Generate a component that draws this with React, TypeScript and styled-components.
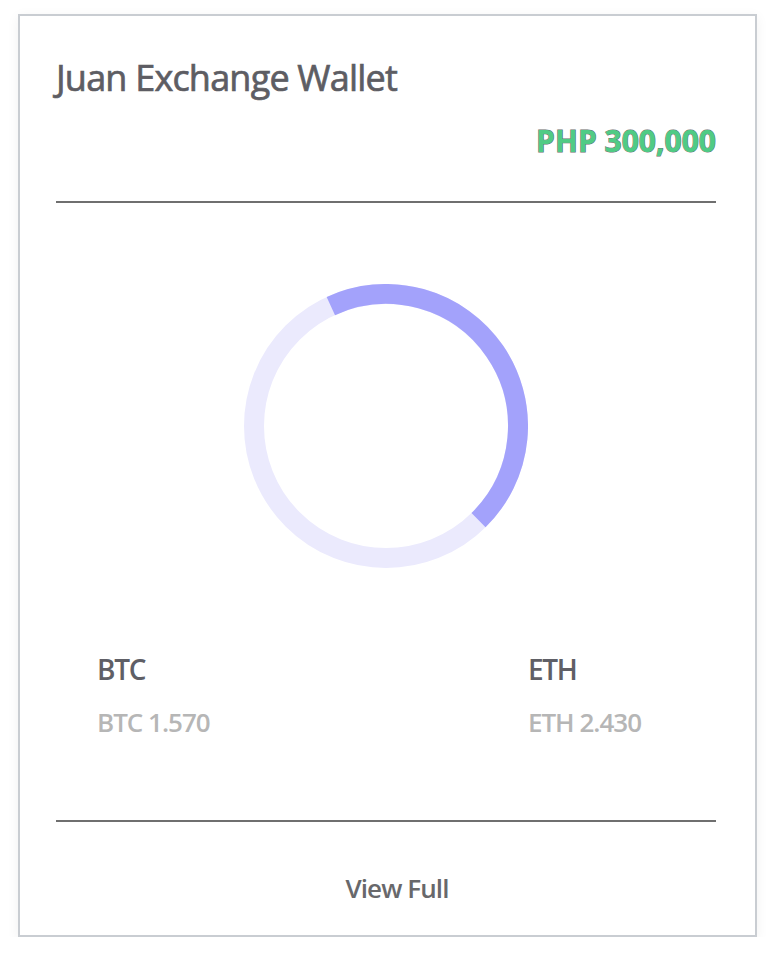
import React from 'react';
import styled, { createGlobalStyle } from 'styled-components';

const GlobalStyle = createGlobalStyle`
  html, body {
    margin: 0;
    padding: 0;
    background: #ffffff;
  }
  body {
    font-family: 'Open Sans', 'Noto Sans', sans-serif;
  }
`;

const Card = styled.div`
  box-sizing: border-box;
  width: 739px;
  margin: 14px 0 0 18px;
  border: 2px solid #c9cdd2;
  background: #fff;
  box-shadow: 0 3px 12px rgba(0, 0, 0, 0.06);
  padding: 44px 39px 34px 36px;
  display: flex;
  flex-direction: column;
`;

const Title = styled.h1`
  margin: 0;
  font-size: 36px;
  line-height: 1;
  font-weight: 400;
  color: #5d5d63;
  -webkit-text-stroke: 0.7px #5d5d63;
  letter-spacing: -0.8px;
`;

const Total = styled.div`
  margin-top: 30px;
  align-self: flex-end;
  font-size: 30px;
  line-height: 1;
  font-weight: 700;
  color: #4fcb85;
  -webkit-text-stroke: 1px #6d6d6d;
  paint-order: stroke fill;
`;

const Divider = styled.hr<{ $gap: number }>`
  margin: ${(p) => p.$gap}px 0 0;
  border: none;
  height: 2px;
  background: #6f6f6f;
`;

const ChartWrap = styled.div`
  margin-top: 81px;
  display: flex;
  justify-content: center;
`;

const Coins = styled.div`
  margin-top: 87px;
  display: flex;
  justify-content: space-between;
  padding: 0 75px 0 41px;
`;

const Coin = styled.div`
  display: flex;
  flex-direction: column;
`;

const CoinName = styled.span`
  font-size: 28px;
  line-height: 1;
  font-weight: 600;
  color: #5f5f66;
  letter-spacing: -1.3px;
`;

const CoinAmount = styled.span`
  margin-top: 26px;
  font-size: 26px;
  line-height: 1;
  font-weight: 600;
  color: #b6b6b6;
  letter-spacing: -1px;
`;

const ViewFull = styled.a`
  margin-top: 53px;
  align-self: center;
  padding-left: 22px;
  font-size: 26px;
  line-height: 1;
  font-weight: 600;
  color: #68686b;
  letter-spacing: -0.9px;
  cursor: pointer;
`;

const R = 132;
const C = 142;

function point(deg: number) {
  const rad = (deg * Math.PI) / 180;
  return [C + R * Math.sin(rad), C - R * Math.cos(rad)];
}

function Donut({ from, to }: { from: number; to: number }) {
  const [x1, y1] = point(from);
  const [x2, y2] = point(to);
  const large = to - from > 180 ? 1 : 0;
  return (
    <svg width="284" height="284" viewBox="0 0 284 284">
      <circle cx={C} cy={C} r={R} fill="none" stroke="#ebeafd" strokeWidth="20" />
      <path
        d={`M ${x1} ${y1} A ${R} ${R} 0 ${large} 1 ${x2} ${y2}`}
        fill="none"
        stroke="#a3a2fb"
        strokeWidth="20"
      />
    </svg>
  );
}

const coins = [
  { name: 'BTC', amount: 'BTC 1.570' },
  { name: 'ETH', amount: 'ETH 2.430' },
];

export default function App() {
  return (
    <>
      <GlobalStyle />
      <Card>
        <Title>Juan Exchange Wallet</Title>
        <Total>PHP 300,000</Total>
        <Divider $gap={45} />
        <ChartWrap>
          <Donut from={-24.7} to={135.5} />
        </ChartWrap>
        <Coins>
          {coins.map((c) => (
            <Coin key={c.name}>
              <CoinName>{c.name}</CoinName>
              <CoinAmount>{c.amount}</CoinAmount>
            </Coin>
          ))}
        </Coins>
        <Divider $gap={85} />
        <ViewFull>View Full</ViewFull>
      </Card>
    </>
  );
}
